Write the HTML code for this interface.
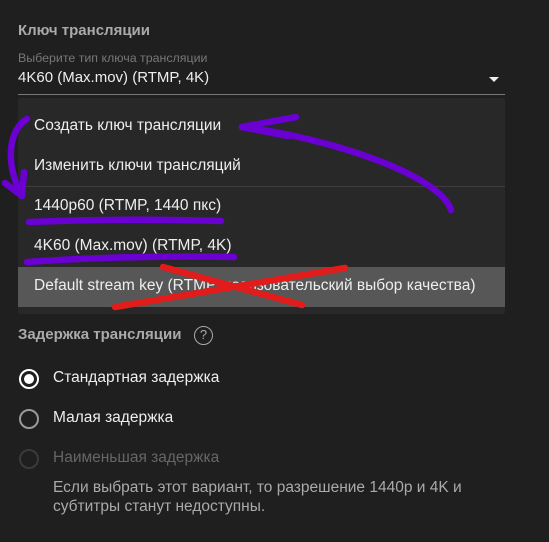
<!DOCTYPE html>
<html><head><meta charset="utf-8"><style>
*{margin:0;padding:0;box-sizing:border-box}
body{width:549px;height:542px;background:#1f1f1f;font-family:"Liberation Sans","DejaVu Sans",sans-serif;position:relative;overflow:hidden;color:#fff}
.a{position:absolute;white-space:nowrap}
.m{font-size:15.5px;color:#eee}
</style></head><body>
<div class="a" style="left:18px;top:22px;font-size:15px;font-weight:bold;color:#aaa">Ключ трансляции</div>
<div class="a" style="left:18px;top:51px;font-size:12.4px;color:#777">Выберите тип ключа трансляции</div>
<div class="a" style="left:18px;top:69px;font-size:15px;color:#eee">4K60 (Max.mov) (RTMP, 4K)</div>
<div class="a" style="left:489px;top:77px;width:0;height:0;border-left:5px solid transparent;border-right:5px solid transparent;border-top:5px solid #eee"></div>
<div class="a" style="left:18px;top:94px;width:487px;height:1px;background:#777"></div>
<div class="a" style="left:18px;top:98px;width:487px;height:216px;background:#282828;border-radius:2px"></div>
<div class="a" style="left:18px;top:186px;width:487px;height:1px;background:#3e3e3e"></div>
<div class="a" style="left:18px;top:267px;width:487px;height:40px;background:#575757"></div>
<div class="a m" style="left:34px;top:117px">Создать ключ трансляции</div>
<div class="a m" style="left:34px;top:157px">Изменить ключи трансляций</div>
<div class="a m" style="left:34px;top:197px">1440p60 (RTMP, 1440 пкс)</div>
<div class="a m" style="left:34px;top:237px">4K60 (Max.mov) (RTMP, 4K)</div>
<div class="a m" style="left:34px;top:277px">Default stream key (RTMP, пользовательский выбор качества)</div>
<div class="a" style="left:18px;top:326px;font-size:15px;font-weight:bold;color:#aaa">Задержка трансляции</div>
<div class="a" style="left:194px;top:326px;width:19px;height:19px;border:1.5px solid #aaa;border-radius:50%;font-size:13px;color:#aaa;text-align:center;line-height:16px">?</div>
<div class="a" style="left:19px;top:369px;width:20px;height:20px;border:2px solid #fff;border-radius:50%"></div>
<div class="a" style="left:24px;top:374px;width:10px;height:10px;background:#fff;border-radius:50%"></div>
<div class="a" style="left:19px;top:409px;width:20px;height:20px;border:2px solid #999;border-radius:50%"></div>
<div class="a" style="left:19px;top:449px;width:20px;height:20px;border:2px solid #3a3a3a;border-radius:50%"></div>
<div class="a m" style="left:53px;top:369px">Стандартная задержка</div>
<div class="a m" style="left:53px;top:409px">Малая задержка</div>
<div class="a" style="left:53px;top:449px;font-size:15.5px;color:#666">Наименьшая задержка</div>
<div class="a" style="left:53px;top:478px;font-size:15.5px;color:#aaa;line-height:19px">Если выбрать этот вариант, то разрешение 1440р и 4K и<br>субтитры станут недоступны.</div>
<svg class="a" style="left:0;top:0" width="549" height="542" fill="none" stroke-linecap="round" stroke-linejoin="round">
<g stroke="#6a00d2" stroke-width="6.5">
<path d="M242,127 C330,138 440,175 451,210"/>
<path d="M242,127 L296,117 M242,127 L288,136"/>
<path d="M27,119 C8,130 5,165 22,196 M5,183 L22,196 L24,172"/>
<path d="M29,222 Q130,218 221,221"/>
<path d="M27,262 Q130,255 234,257"/>
</g>
<g stroke="#e21b1b" stroke-width="6.5">
<path d="M163,267 L302,305"/>
<path d="M115,307 L345,268"/>
</g>
</svg>
</body></html>
